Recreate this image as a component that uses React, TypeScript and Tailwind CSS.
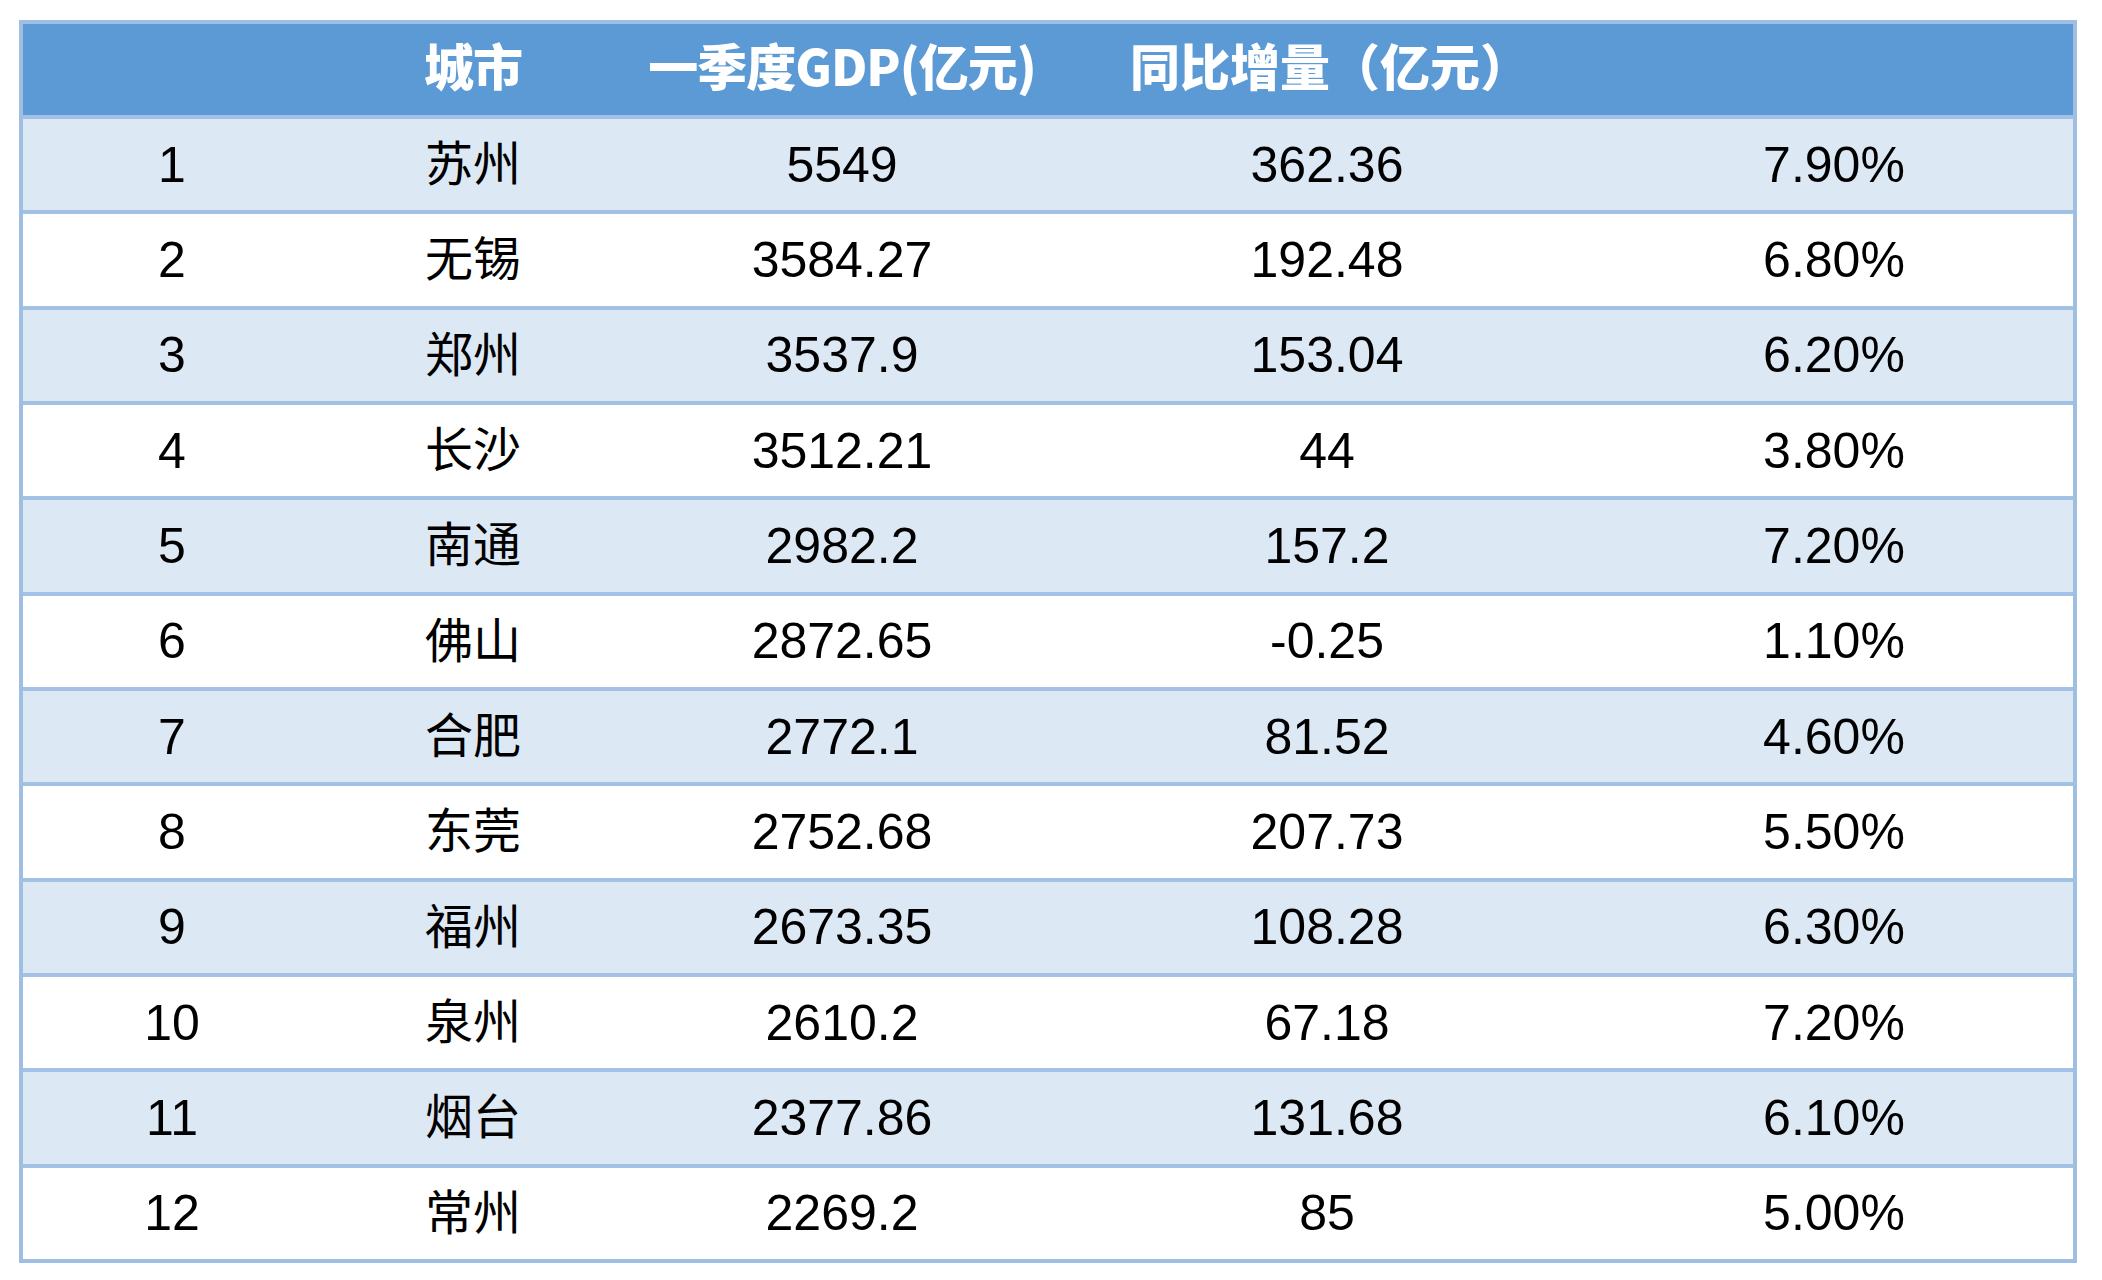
import React from "react";

const rows: [string, string, string, string, string][] = [
  ["1", "苏州", "5549", "362.36", "7.90%"],
  ["2", "无锡", "3584.27", "192.48", "6.80%"],
  ["3", "郑州", "3537.9", "153.04", "6.20%"],
  ["4", "长沙", "3512.21", "44", "3.80%"],
  ["5", "南通", "2982.2", "157.2", "7.20%"],
  ["6", "佛山", "2872.65", "-0.25", "1.10%"],
  ["7", "合肥", "2772.1", "81.52", "4.60%"],
  ["8", "东莞", "2752.68", "207.73", "5.50%"],
  ["9", "福州", "2673.35", "108.28", "6.30%"],
  ["10", "泉州", "2610.2", "67.18", "7.20%"],
  ["11", "烟台", "2377.86", "131.68", "6.10%"],
  ["12", "常州", "2269.2", "85", "5.00%"],
];

const cols = "grid grid-cols-[298px_304px_434px_536px_478px]";

export default function App() {
  return (
    <div className="w-[2102px] h-[1280px] bg-white pl-[19px] pt-[20px]">
      <div className="w-[2058px] border-4 border-[#9fbfe2] bg-white">
        <div
          className={`${cols} h-[91px] bg-[#5b9ad4] text-white items-center pb-[10px] font-black text-[50px] tracking-[-1px]`}
          style={{ fontFamily: '"Noto Sans CJK SC", "Liberation Sans", sans-serif' }}
        >
          <div />
          <div className="text-center">城市</div>
          <div className="text-center">一季度GDP(亿元)</div>
          <div className="text-center pl-[6px] tracking-[0px]">同比增量（亿元）</div>
          <div />
        </div>
        {rows.map((r, i) => (
          <div
            key={r[0]}
            className={`${cols} h-[95.33px] border-t-4 border-[#a2c1e4] items-center text-black ${
              i % 2 === 0 ? "bg-[#dde8f5]" : "bg-white"
            }`}
            style={{ fontFamily: '"Liberation Sans", "Noto Sans CJK SC", sans-serif' }}
          >
            <div className="text-center text-[50px] leading-none">{r[0]}</div>
            <div
              className="text-center text-[48px] leading-none pb-[9px]"
              style={{ fontFamily: '"Noto Sans CJK SC", sans-serif' }}
            >
              {r[1]}
            </div>
            <div className="text-center text-[50px] leading-none">{r[2]}</div>
            <div className="text-center text-[50px] leading-none">{r[3]}</div>
            <div className="text-center text-[50px] leading-none">{r[4]}</div>
          </div>
        ))}
      </div>
    </div>
  );
}
